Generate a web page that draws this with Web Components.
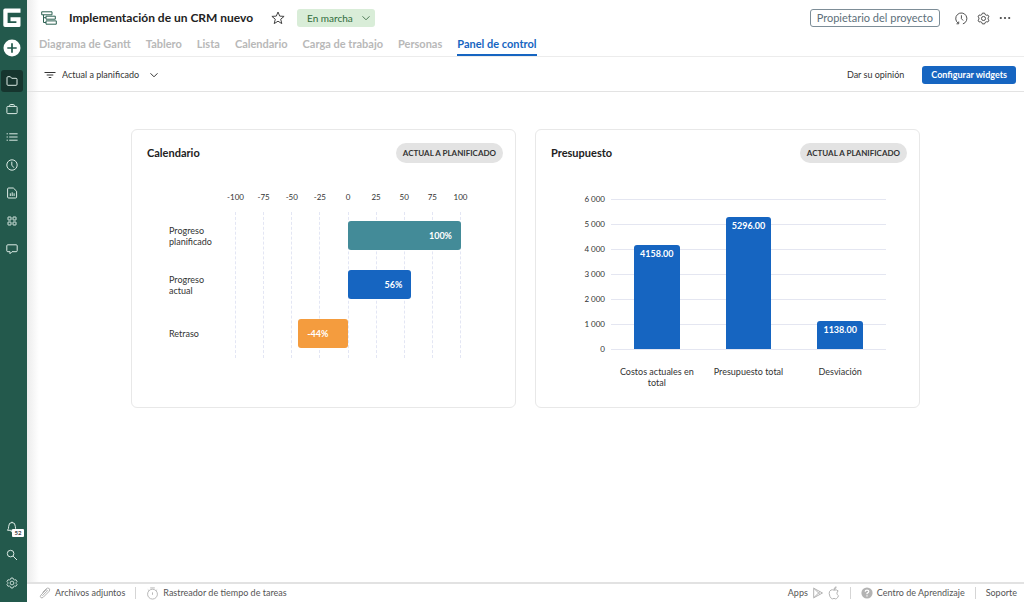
<!DOCTYPE html>
<html lang="es">
<head>
<meta charset="utf-8">
<meta name="viewport" content="width=device-width, initial-scale=1">
<title>Implementación de un CRM nuevo</title>
<style>
  html, body { height: 100%; margin: 0; }
  body {
    font-family: Lato, "Open Sans", sans-serif;
    font-size: 9px;
    line-height: 12px;
    color: #333;
    background: #fff;
    --green: #23594c;
    --blue: #1665c1;
  }
</style>
</head>
<body>
<app-shell>
  <side-rail slot="rail"></side-rail>
  <project-header slot="top" heading="Implementación de un CRM nuevo"></project-header>
  <widget-toolbar slot="top"></widget-toolbar>
  <widget-card heading="Calendario" tag="ACTUAL A PLANIFICADO">
    <range-chart></range-chart>
  </widget-card>
  <widget-card heading="Presupuesto" tag="ACTUAL A PLANIFICADO">
    <column-chart></column-chart>
  </widget-card>
  <status-footer slot="bottom"></status-footer>
</app-shell>

<script>
const ICONS = {
  logo: ['0 0 18 20', '<path fill="#fff" stroke="none" d="M2 .5H17.500V4.800H4.600V14.900H13.400V13.300H7.500V9.300H17.500V17.500Q17.500 19 16 19H2Q.3 19 .3 17.300V2.200Q.3 .5 2 .5Z"/>'],
  plus: ['0 0 18 18', '<circle cx="9" cy="9" r="8.500" fill="#fff" stroke="none"/><path d="M9 4.300V13.700M4.300 9H13.700" stroke="#23594c" stroke-width="1.700"/>'],
  folder: ['0 0 12 12', '<path d="M1 9.300V2.700Q1 1.700 2 1.700H4.300L5.700 3.300H10Q11 3.300 11 4.300V9.300Q11 10.300 10 10.300H2Q1 10.300 1 9.300Z"/>'],
  briefcase: ['0 0 12 12', '<rect x=".9" y="3.400" width="10.200" height="7.200" rx=".9"/><path d="M3.700 3.400V2.300Q3.700 1.500 4.500 1.500H7.500Q8.300 1.500 8.300 2.300V3.400"/>'],
  list: ['0 0 12 12', '<path d="M3.200 2.800H11.600M3.200 6H11.600M3.200 9.200H11.600M.6 2.800H1.900M.6 6H1.900M.6 9.200H1.900"/>'],
  clock: ['0 0 12 12', '<circle cx="6" cy="6" r="5.200"/><path d="M5.800 2.700V6.200L7.900 8.700"/>'],
  report: ['0 0 12 12', '<path d="M1.600 10V2Q1.600 1 2.600 1H7.300L10.600 4.200V10Q10.600 11 9.600 11H2.600Q1.600 11 1.600 10Z"/><path d="M4.300 9V6.300M6.200 9V5.300M8.100 9V6.300"/>'],
  apps: ['0 0 12 12', '<rect x="2" y="2" width="3" height="3" rx=".3"/><rect x="7" y="2" width="3" height="3" rx=".3"/><rect x="2" y="7" width="3" height="3" rx=".3"/><rect x="7" y="7" width="3" height="3" rx=".3"/>'],
  chat: ['0 0 12 12', '<path d="M1.800 1.800H10.200Q11.200 1.800 11.200 2.800V7.700Q11.200 8.700 10.200 8.700H6L4 10.700V8.700H1.800Q.8 8.700 .8 7.700V2.800Q.8 1.800 1.800 1.800Z"/>'],
  bell: ['0 0 12 12', '<path d="M1.500 9.300Q2.700 8 2.700 5.300Q2.700 1.500 6 1.500Q9.300 1.500 9.300 5.300Q9.300 8 10.500 9.300ZM5.300 1.300H6.700M4.600 9.500Q4.800 10.800 6 10.800"/>'],
  search: ['0 0 12 12', '<circle cx="4.600" cy="4.600" r="3.300"/><path d="M7.100 7.100L11 11"/>'],
  gear: ['0 0 14 14', '<path d="M5.800 1.200H8.200L8.700 2.700L10.200 3.500L11.700 3.200L12.900 5.300L11.900 6.300V7.700L12.900 8.700L11.700 10.800L10.200 10.500L8.700 11.300L8.200 12.800H5.800L5.300 11.300L3.800 10.500L2.300 10.800L1.100 8.700L2.100 7.700V6.300L1.100 5.300L2.300 3.200L3.800 3.500L5.300 2.700Z" stroke-linejoin="round"/><circle cx="7" cy="7" r="2.200"/>'],
  tree: ['0 0 16 14', '<path d="M.7 .8H11V3.800H.7ZM5 5.200H14.300V8.200H5ZM5 9.900H15.300V13.200H5ZM2.500 3.800V11.500H5M2.500 6.700H5"/>'],
  star: ['0 0 14 14', '<path stroke-linejoin="round" d="M7 1L8.700 5.100L13.100 5.400L9.700 8.200L10.800 12.600L7 10.200L3.200 12.600L4.300 8.200L.9 5.400L5.300 5.100Z"/>'],
  chevron: ['0 0 10 10', '<path d="M1.500 3.300L5 6.800L8.500 3.300"/>'],
  filter: ['0 0 12 12', '<path d="M.5 3.500H11.500M2.700 6H9.300M4.700 8.500H7.300"/>'],
  history: ['0 0 14 14', '<path d="M3.400 12A6 6 0 1 1 8.500 12.800M6.900 3.500V7.200L8.800 9.200M1.600 12.700H4V10.300"/>'],
  dots: ['0 0 12 12', '<g fill="currentColor" stroke="none"><circle cx="1.800" cy="6" r="1.100"/><circle cx="6" cy="6" r="1.100"/><circle cx="10.200" cy="6" r="1.100"/></g>'],
  clip: ['0 0 12 12', '<path d="M3.300 8.800L8 4.100Q8.700 3.300 8 2.900Q7.500 2.500 6.900 3.100L2 8Q.7 9.500 1.800 10.500Q2.900 11.500 4.300 10.200L9.800 4.700Q11.500 2.800 10.200 1.500Q8.800 .3 7 2L3.500 5.500"/>'],
  timer: ['0 0 14 14', '<circle cx="7" cy="7.700" r="5.300"/><path d="M4.500 1H9.500M7 5.800V8.400M2 2.800L3 3.800M12 2.800L11 3.800"/>'],
  play: ['0 0 12 12', '<path d="M1.700 1.200L10.500 6L1.700 10.800ZM1.700 1.200L8 7.400M1.700 10.800L8 4.600"/>'],
  apple: ['0 0 12 14', '<path d="M6 4.200Q4.500 3.400 3 4Q1 5 1.200 7.600Q1.600 11 3.500 12.600Q4.300 13.200 6 12.400Q7.700 13.200 8.600 12.600Q10 11.300 10.500 9.700Q8.800 8.700 8.900 7.200Q9 5.800 10.200 4.900Q8.500 3.200 6 4.200ZM6 3.700Q5.900 1.500 8.100 .8Q8.300 2.900 6 3.700"/>'],
  help: ['0 0 12 12', '<circle cx="6" cy="6" r="5.600" fill="currentColor" stroke="none"/><path stroke="#fff" stroke-width="1.200" d="M4.200 4.800Q4.200 3.100 6 3.100Q7.800 3.100 7.800 4.600Q7.800 5.500 6 6.400V7.200M6 8.200V9.400"/>']
};

const define = (name, render) => customElements.define(name, class extends HTMLElement {
  connectedCallback() {
    if (this.shadowRoot) return;
    this.attachShadow({ mode: 'open' }).innerHTML = render(this);
  }
});

/* Line icon: name and size (width in px). */
define('line-icon', el => {
  const [box, body] = ICONS[el.getAttribute('name')];
  return `<style>
    :host { display: block; flex: none; }
    svg { display: block; width: ${el.getAttribute('size') || 12}px; fill: none; stroke: currentColor; stroke-width: 1; }
  </style><svg viewBox="${box}" aria-hidden="true">${body}</svg>`;
});

define('app-shell', () => `<style>
  :host { display: grid; grid-template-columns: 27px minmax(0, 1fr); min-height: 100vh; }
  .page { display: flex; flex-direction: column; background: linear-gradient(90deg, #ececec, #fff 12px); }
  main { flex: 1; padding: 37px 104px; }
  .cards { display: grid; grid-template-columns: repeat(auto-fit, minmax(320px, 1fr)); gap: 19px; max-width: 1200px; margin: auto; }
</style>
<slot name="rail"></slot>
<div class="page">
  <slot name="top"></slot>
  <main><div class="cards"><slot></slot></div></main>
  <slot name="bottom"></slot>
</div>`);

define('side-rail', () => {
  const item = ([icon, label], on) => `<a href="#${icon}" aria-label="${label}"${on === 0 ? ' class="on"' : ''}><line-icon name="${icon}"></line-icon></a>`;
  const nav = [['folder', 'Proyectos'], ['briefcase', 'Portafolios'], ['list', 'Mis tareas'], ['clock', 'Horas'], ['report', 'Informes'], ['apps', 'Recursos'], ['chat', 'Comentarios']];
  return `<style>
    :host { display: flex; flex-direction: column; justify-content: space-between; background: var(--green); color: #dcebe5; padding: 8px 4px 8px 1px; }
    .group { display: flex; flex-direction: column; gap: 6px; align-items: center; }
    .brand { display: flex; flex-direction: column; align-items: center; gap: 11px; padding-bottom: 7px; }
    .brand a, button { display: flex; height: 19px; padding: 0; border: 0; background: none; align-items: center; }
    nav a { display: flex; align-items: center; justify-content: center; width: 22px; height: 22px; border-radius: 3px; color: inherit; position: relative; }
    .on { background: #16352e; }
    .badge { position: absolute; left: 11px; top: 13px; background: #fff; color: #444; font-size: 6px; line-height: 8px; font-weight: 700; width: 12px; text-align: center; border-radius: 1px; }
  </style>
  <div class="group">
    <div class="brand">
      <a href="#inicio" aria-label="Inicio"><line-icon name="logo" size="18"></line-icon></a>
      <button aria-label="Crear"><line-icon name="plus" size="18"></line-icon></button>
    </div>
    <nav class="group">${nav.map(item).join('')}</nav>
  </div>
  <nav class="group">
    <a href="#avisos" aria-label="Avisos"><line-icon name="bell"></line-icon><span class="badge">52</span></a>
    ${item(['search', 'Buscar'])}${item(['gear', 'Ajustes'])}
  </nav>`;
});

define('project-header', el => {
  const tabs = ['Diagrama de Gantt', 'Tablero', 'Lista', 'Calendario', 'Carga de trabajo', 'Personas', 'Panel de control'];
  return `<style>
    :host { display: block; border-bottom: 1px solid #ececec; padding: 8px 12px 0; }
    .row { display: flex; align-items: center; height: 20px; }
    h1 { margin: 0 auto 0 12px; font-size: 12px; line-height: 20px; font-weight: 700; color: #222; white-space: nowrap; }
    .name { display: flex; align-items: center; min-width: 232px; }
    button { display: flex; padding: 0; border: 0; background: none; color: #444; font: inherit; }
    .tree { color: #2c6152; margin-left: 2px; }
    .status { display: grid; align-items: center; margin-left: 12px; color: #2f6b3a; font-size: 10px; }
    .status > * { grid-area: 1 / 1; }
    .status line-icon { justify-self: end; margin-right: 4px; pointer-events: none; color: #4d7a55; }
    select { appearance: none; border: 0; border-radius: 3px; background: #d9edd8; color: inherit; font: inherit; height: 18px; padding: 0 22px 0 10px; }
    .tools { display: flex; align-items: center; gap: 9px; margin-left: auto; padding-right: 1px; }
    .owner { border: 1px solid #7d8d97; border-radius: 3px; color: #5d6f7a; font-size: 11px; line-height: 16px; padding: 0 6px; margin-right: 6px; }
    nav { display: flex; gap: 15px; }
    nav a { font-size: 11px; line-height: 16px; font-weight: 700; color: #b8b8b8; text-decoration: none; padding: 8px 0 2px; border-bottom: 2px solid transparent; white-space: nowrap; }
    nav a[aria-current] { color: var(--blue); border-color: var(--blue); }
  </style>
  <div class="row">
    <div class="name"><line-icon class="tree" name="tree" size="16"></line-icon>
    <h1>${el.getAttribute('heading')}</h1></div>
    <button aria-label="Favorito"><line-icon name="star" size="14"></line-icon></button>
    <div class="status"><select aria-label="Estado"><option>En marcha</option></select><line-icon name="chevron" size="10"></line-icon></div>
    <div class="tools">
      <button class="owner">Propietario del proyecto</button>
      <button aria-label="Historial"><line-icon name="history" size="13"></line-icon></button>
      <button aria-label="Configuración"><line-icon name="gear" size="13"></line-icon></button>
      <button aria-label="Más"><line-icon name="dots" size="12"></line-icon></button>
    </div>
  </div>
  <nav>${tabs.map((t, i) => `<a href="#"${i === 6 ? ' aria-current="page"' : ''}>${t}</a>`).join('')}</nav>`;
});

define('widget-toolbar', () => `<style>
  :host { display: flex; align-items: center; height: 33px; border-bottom: 1px solid #e3e3e3; padding: 1px 8px 0 17px; }
  .view { display: grid; align-items: center; }
  .view > * { grid-area: 1 / 1; }
  .view line-icon { pointer-events: none; }
  .end { justify-self: end; }
  select { appearance: none; border: 0; background: none; color: inherit; font: inherit; height: 20px; padding: 0 19px 0 18px; }
  a { margin-left: auto; color: inherit; text-decoration: none; }
  button { margin-left: 18px; border: 0; border-radius: 3px; background: var(--blue); color: #fff; font: inherit; font-weight: 700; line-height: 18px; padding: 0 9px; }
</style>
<div class="view"><line-icon name="filter"></line-icon><select aria-label="Vista"><option>Actual a planificado</option></select><line-icon class="end" name="chevron" size="10"></line-icon></div>
<a href="#opinion">Dar su opinión</a>
<button>Configurar widgets</button>`);

define('widget-card', el => `<style>
  :host { display: block; border: 1px solid #e8e8e8; border-radius: 6px; background: #fff; min-height: 277px; }
  header { display: flex; align-items: center; justify-content: space-between; padding: 13px 12px 0 15px; }
  h2 { margin: 0; font-size: 11px; line-height: 20px; font-weight: 700; color: #222; }
  span { background: #e3e3e3; border-radius: 10px; padding: 0 7px; font-size: 8px; line-height: 20px; font-weight: 700; }
</style>
<header><h2>${el.getAttribute('heading')}</h2><span>${el.getAttribute('tag')}</span></header>
<slot></slot>`);

/* Horizontal bars on a -100..100 axis; half of the plot is 100 %. */
define('range-chart', () => {
  const rows = [['Progreso planificado', 100, '#438b98'], ['Progreso actual', 56, '#1665c1'], ['Retraso', -44, '#f49c3e']];
  const ticks = [-100, -75, -50, -25, 0, 25, 50, 75, 100];
  return `<style>
    :host { display: grid; grid-template: 19px repeat(3, 49px) / 66px 1fr; padding: 29px 54px 0 37px; }
    .axis { grid-area: 1 / 2 / 5 / 3; display: flex; justify-content: space-between; font-size: 8px; line-height: 10px; }
    .tick { width: 1px; display: flex; flex-direction: column; align-items: center; gap: 10px; }
    .tick::after { content: ""; flex: 1; border-left: 1px dashed #e3e6f4; }
    .label { grid-column: 1; align-self: center; line-height: 11px; padding-right: 12px; }
    .lane { grid-column: 2; align-self: center; }
    .bar { box-sizing: border-box; border-radius: 3px; color: #fff; line-height: 29px; font-weight: 700; padding: 0 9px; text-align: right; }
    .neg { text-align: left; }
  </style>
  <div class="axis">${ticks.map(t => `<div class="tick">${t}</div>`).join('')}</div>
  ${rows.map(([name, v, c], i) => `<div class="label" style="grid-row:${i + 2}">${name}</div>
  <div class="lane" style="grid-row:${i + 2}"><div class="bar${v < 0 ? ' neg' : ''}" style="background:${c};width:${Math.abs(v) / 2}%;margin-left:${50 + Math.min(v, 0) / 2}%">${v}%</div></div>`).join('')}`;
});

/* Vertical columns on a 0..6000 axis, 25px per thousand. */
define('column-chart', () => {
  const cols = [['Costos actuales en total', 4158], ['Presupuesto total', 5296], ['Desviación', 1138]];
  const ticks = ['6 000', '5 000', '4 000', '3 000', '2 000', '1 000', '0'];
  return `<style>
    :host { display: grid; grid-template: 175px auto / 69px 1fr; column-gap: 6px; padding: 24px 33px 0 0; }
    .scale { display: grid; grid-auto-rows: 25px; font-size: 8px; line-height: 25px; text-align: right; }
    .lines { grid-area: 1 / 2; display: grid; grid-auto-rows: 25px; padding-top: 12px; }
    .lines i { border-top: 1px solid #e4e6f1; }
    .cols { grid-area: 1 / 2; display: grid; grid-template-columns: repeat(3, 1fr); align-items: end; justify-items: center; padding-bottom: 13px; }
    .col { width: 50%; background: var(--blue); border-radius: 3px 3px 0 0; color: #fff; line-height: 18px; font-weight: 700; text-align: center; }
    .names { grid-area: 2 / 2; display: grid; grid-template-columns: repeat(3, 1fr); text-align: center; line-height: 11px; padding-top: 4px; }
    .names span { padding: 0 4px; }
  </style>
  <div class="scale">${ticks.map(t => `<span>${t}</span>`).join('')}</div>
  <div class="lines">${ticks.map(() => '<i></i>').join('')}</div>
  <div class="cols">${cols.map(c => `<div class="col" style="height:${Math.round(c[1] / 40)}px">${c[1].toFixed(2)}</div>`).join('')}</div>
  <div class="names">${cols.map(c => `<span>${c[0]}</span>`).join('')}</div>`;
});

define('status-footer', () => `<style>
  :host { display: flex; align-items: center; height: 18px; border-top: 2px solid #e2e2e2; padding: 0 7px 0 12px; color: #555; background: #fff; }
  a { display: flex; align-items: center; gap: 4px; color: inherit; text-decoration: none; }
  line-icon { color: #b3b3b3; }
  i { width: 1px; height: 12px; background: #d5d5d5; margin: 0 10px; }
  .right { margin-left: auto; }
</style>
<a href="#adjuntos"><line-icon name="clip"></line-icon>Archivos adjuntos</a><i></i>
<a href="#rastreador"><line-icon name="timer" size="13"></line-icon>Rastreador de tiempo de tareas</a>
<a class="right" href="#apps">Apps <line-icon name="play"></line-icon><line-icon name="apple"></line-icon></a><i></i>
<a href="#aprendizaje"><line-icon name="help"></line-icon>Centro de Aprendizaje</a><i></i>
<a href="#soporte">Soporte</a>`);
</script>
</body>
</html>
